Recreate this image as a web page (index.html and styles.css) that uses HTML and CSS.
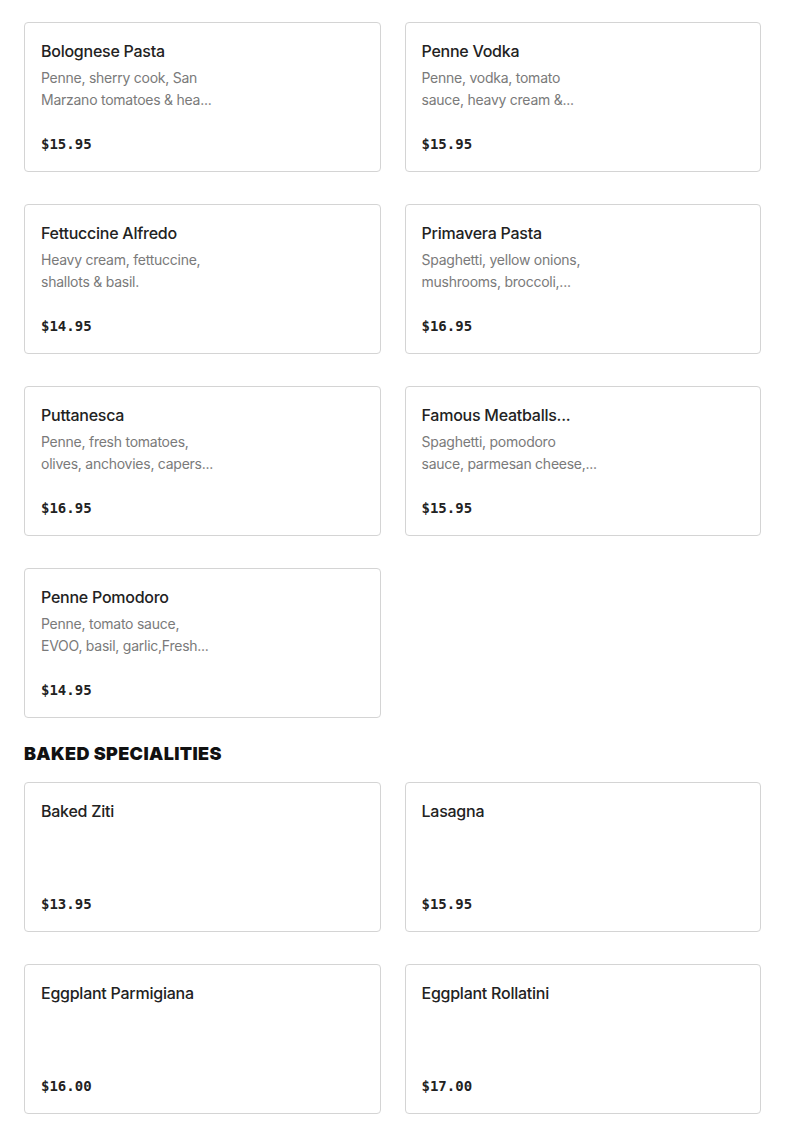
FILE: index.html
```html
<!DOCTYPE html>
<html lang="en">
<head>
<meta charset="utf-8">
<title>Menu</title>
<link rel="stylesheet" href="styles.css">
</head>
<body>
<div class="fade"></div>
<main class="menu">
  <section class="section">
    <h2 class="section-title">PASTA SPECIALS</h2>
    <div class="grid">
      <div class="card">
        <div class="name">Bolognese Pasta</div>
        <div class="desc"><span>Penne, sherry cook, San</span><span>Marzano tomatoes &amp; hea...</span></div>
        <div class="price">$15.95</div>
      </div>
      <div class="card">
        <div class="name">Penne Vodka</div>
        <div class="desc"><span>Penne, vodka, tomato</span><span>sauce, heavy cream &amp;...</span></div>
        <div class="price">$15.95</div>
      </div>
      <div class="card">
        <div class="name">Fettuccine Alfredo</div>
        <div class="desc"><span>Heavy cream, fettuccine,</span><span>shallots &amp; basil.</span></div>
        <div class="price">$14.95</div>
      </div>
      <div class="card">
        <div class="name">Primavera Pasta</div>
        <div class="desc"><span>Spaghetti, yellow onions,</span><span>mushrooms, broccoli,...</span></div>
        <div class="price">$16.95</div>
      </div>
      <div class="card">
        <div class="name">Puttanesca</div>
        <div class="desc"><span>Penne, fresh tomatoes,</span><span>olives, anchovies, capers...</span></div>
        <div class="price">$16.95</div>
      </div>
      <div class="card">
        <div class="name">Famous Meatballs...</div>
        <div class="desc"><span>Spaghetti, pomodoro</span><span>sauce, parmesan cheese,...</span></div>
        <div class="price">$15.95</div>
      </div>
      <div class="card">
        <div class="name">Penne Pomodoro</div>
        <div class="desc"><span>Penne, tomato sauce,</span><span>EVOO, basil, garlic,Fresh...</span></div>
        <div class="price">$14.95</div>
      </div>
    </div>
  </section>
  <section class="section">
    <h2 class="section-title">BAKED SPECIALITIES</h2>
    <div class="grid">
      <div class="card">
        <div class="name">Baked Ziti</div>
        <div class="price">$13.95</div>
      </div>
      <div class="card">
        <div class="name">Lasagna</div>
        <div class="price">$15.95</div>
      </div>
      <div class="card">
        <div class="name">Eggplant Parmigiana</div>
        <div class="price">$16.00</div>
      </div>
      <div class="card">
        <div class="name">Eggplant Rollatini</div>
        <div class="price">$17.00</div>
      </div>
    </div>
  </section>
</main>
</body>
</html>
```

FILE: styles.css
```css
* { box-sizing: border-box; }
html, body { margin: 0; padding: 0; background: #fff; }
body {
  font-family: Inter, "Liberation Sans", Arial, sans-serif;
  color: #1f1f1f;
}
.fade {
  position: fixed;
  top: 0;
  left: 0;
  right: 0;
  height: 14px;
  background: linear-gradient(to bottom, rgba(255,255,255,0.93), rgba(255,255,255,0.93) 8px, rgba(255,255,255,0));
  z-index: 2;
}
.menu {
  padding: 0 24px 40px;
  margin-top: -18px;
}
.section + .section { margin-top: 24px; }
.section-title {
  margin: 0 0 16px;
  font-size: 18px;
  line-height: 24px;
  font-weight: 900;
  letter-spacing: 0.35px;
  color: #111;
}
.grid {
  display: grid;
  grid-template-columns: 1fr 1fr;
  column-gap: 24px;
  row-gap: 32px;
}
.card {
  height: 150px;
  border: 1px solid #d4d4d4;
  border-radius: 4px;
  padding: 16px 16px 17px;
  display: flex;
  flex-direction: column;
}
.name {
  font-size: 16px;
  line-height: 24px;
  font-weight: 500;
  letter-spacing: -0.25px;
  color: #222;
}
.desc {
  margin-top: 4px;
  font-size: 14px;
  line-height: 22px;
  letter-spacing: -0.25px;
  color: #7a7a7a;
  display: flex;
  flex-direction: column;
}
.desc span { white-space: nowrap; }
.price {
  margin-top: auto;
  font-family: "DejaVu Sans Mono", "Liberation Mono", monospace;
  font-size: 14px;
  line-height: 20px;
  font-weight: 700;
  color: #222;
}
```
